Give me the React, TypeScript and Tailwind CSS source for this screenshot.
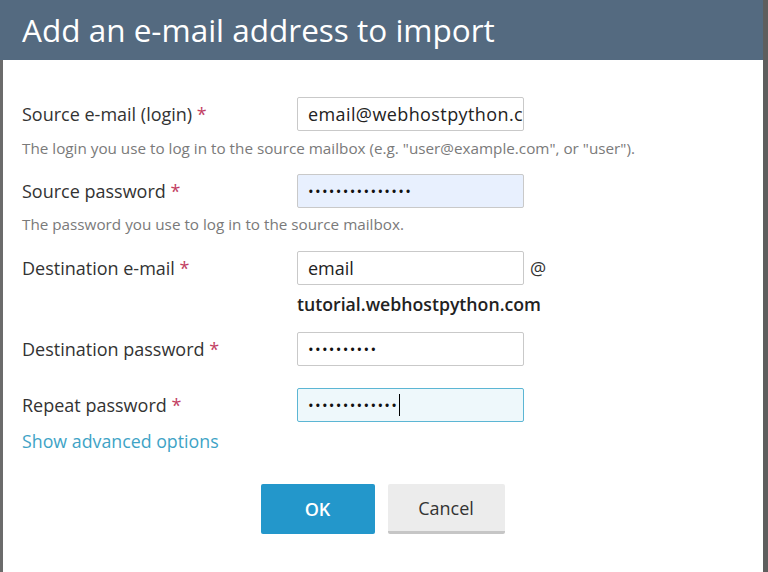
const font = { fontFamily: '"Open Sans", "Liberation Sans", sans-serif' };

function Req() {
  return <span className="text-[#c23e63]"> *</span>;
}

function Field({
  value,
  className = "",
  dots = false,
  caret = false,
}: {
  value: string;
  className?: string;
  dots?: boolean;
  caret?: boolean;
}) {
  return (
    <div
      className={`flex h-[34px] w-[227px] items-center overflow-hidden whitespace-nowrap rounded-[2px] border px-[10px] text-[18px] leading-[24px] text-[#222] ${className}`}
    >
      {dots ? <span className="text-[15px] tracking-[1.3px] text-[#111]">{value}</span> : value}
      {caret && <span className="ml-[1px] h-[22px] w-px shrink-0 bg-black" />}
    </div>
  );
}

export default function App() {
  return (
    <div className="flex h-[572px] w-[768px] flex-col bg-[#5e5e5e] pr-[5px]" style={font}>
      <div className="flex h-[60px] shrink-0 items-center bg-[#546a80] pl-[22px] text-[31.5px] text-white">
        Add an e-mail address to import
      </div>
      <div className="flex flex-1 flex-col border-l-[3px] border-[#6b6b6b] bg-white pl-[19px] pt-[37px] text-[18px] leading-[24px] text-[#333]">
        <div className="flex h-[34px] items-center">
          <div className="w-[275px]">
            Source e-mail (login)
            <Req />
          </div>
          <Field value="email@webhostpython.c" className="border-[#c9c9c9] bg-white tracking-[0.4px]" />
        </div>
        <div className="mt-[7px] h-[20px] text-[15.25px] leading-[20px] text-[#7a7a7a]">
          The login you use to log in to the source mailbox (e.g. "user@example.com", or "user").
        </div>

        <div className="mt-[16px] flex h-[34px] items-center">
          <div className="w-[275px]">
            Source password
            <Req />
          </div>
          <Field value="•••••••••••••••" dots className="border-[#c9c9c9] bg-[#e8f0fe]" />
        </div>
        <div className="mt-[6px] h-[20px] text-[15.25px] leading-[20px] text-[#7a7a7a]">
          The password you use to log in to the source mailbox.
        </div>

        <div className="mt-[17px] flex h-[34px] items-center">
          <div className="w-[275px]">
            Destination e-mail
            <Req />
          </div>
          <Field value="email" className="border-[#c9c9c9] bg-white" />
          <span className="ml-[6px]">@</span>
        </div>
        <div className="mt-[7px] h-[24px] pl-[275px] text-[17.7px] font-semibold text-[#222]">
          tutorial.webhostpython.com
        </div>

        <div className="mt-[16px] flex h-[34px] items-center">
          <div className="w-[275px]">
            Destination password
            <Req />
          </div>
          <Field value="••••••••••" dots className="border-[#c9c9c9] bg-white" />
        </div>

        <div className="mt-[22px] flex h-[34px] items-center">
          <div className="w-[275px]">
            Repeat password
            <Req />
          </div>
          <Field value="•••••••••••••" dots caret className="border-[#5cb6d4] bg-[#eef8fb]" />
        </div>

        <div className="mt-[7px] h-[24px] text-[17.8px] text-[#3ea3c6]">Show advanced options</div>

        <div className="mt-[31px] flex justify-center gap-[13px] pr-[20px]">
          <button className="h-[50px] w-[114px] rounded-[2px] bg-[#2397cb] text-[18px] font-semibold text-white">
            OK
          </button>
          <button className="h-[50px] w-[117px] rounded-[2px] border-b-[3px] border-[#c6c6c6] bg-[#ececec] text-[18px] text-[#333]">
            Cancel
          </button>
        </div>
      </div>
    </div>
  );
}
